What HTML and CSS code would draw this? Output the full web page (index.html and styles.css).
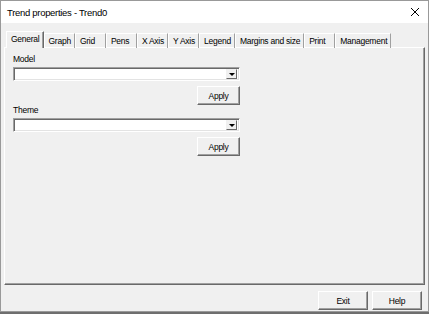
FILE: index.html
```html
<!DOCTYPE html>
<html>
<head>
	<meta charset="utf-8">
	<meta name="viewport" content="width=device-width, initial-scale=1">
	<title>Trend properties - Trend0</title>
	<link rel="stylesheet" href="styles.css">
</head>
<body>
<div class="window">
	<div class="titlebar">
		<span class="title">Trend properties - Trend0</span>
		<svg class="close" width="10" height="10" viewBox="0 0 10 10">
			<path d="M1 1 L9 9 M9 1 L1 9" stroke="#000" stroke-width="1" fill="none"/>
		</svg>
	</div>
	<div class="client">
		<div class="tabs">
			<div class="tab active">General</div>
			<div class="tab">Graph</div>
			<div class="tab">Grid</div>
			<div class="tab">Pens</div>
			<div class="tab">X Axis</div>
			<div class="tab">Y Axis</div>
			<div class="tab">Legend</div>
			<div class="tab">Margins and size</div>
			<div class="tab">Print</div>
			<div class="tab">Management</div>
		</div>
		<div class="panel">
			<div class="field">
				<div class="field-label">Model</div>
				<div class="combo"><span class="combo-arrow"></span></div>
				<div class="field-actions"><button type="button" class="btn btn-apply">Apply</button></div>
			</div>
			<div class="field">
				<div class="field-label">Theme</div>
				<div class="combo"><span class="combo-arrow"></span></div>
				<div class="field-actions"><button type="button" class="btn btn-apply">Apply</button></div>
			</div>
		</div>
	</div>
	<div class="footer">
		<button type="button" class="btn btn-footer">Exit</button>
		<button type="button" class="btn btn-footer">Help</button>
	</div>
</div>
</body>
</html>
```

FILE: styles.css
```css
body
{
	margin:0;
	background-color:#6e6e6e;
	font-family:"Liberation Sans", Arial, sans-serif;
	font-size:8.5px;
	letter-spacing:-0.25px;
	color:#000;
}
.window
{
	width:429px;
	height:312px;
	box-sizing:border-box;
	border:1px solid #999;
	background-color:#f0f0f0;
	display:flex;
	flex-direction:column;
}
.titlebar
{
	height:22px;
	flex:none;
	background-color:#fff;
	display:flex;
	align-items:center;
	justify-content:space-between;
	padding:0 8px 0 6px;
}
.title
{
	font-size:9.5px;
	letter-spacing:-0.3px;
}
.client
{
	flex:1;
	display:flex;
	flex-direction:column;
	padding:8px 3px 0 3px;
}
.tabs
{
	display:flex;
	align-items:flex-end;
	height:17px;
	padding-left:2px;
	margin-bottom:-1px;
	position:relative;
	z-index:1;
}
.tab
{
	height:14px;
	line-height:14px;
	min-width:22px;
	padding:0 3px 0 4px;
	border-top:1px solid #fff;
	border-left:1px solid #fff;
	border-right:1px solid #a0a0a0;
	white-space:nowrap;
}
.tab.active
{
	height:16px;
	line-height:15px;
	background-color:#f0f0f0;
	border-right-color:#696969;
	box-shadow:inset -1px 0 #a0a0a0;
}
.panel
{
	flex:1;
	border:1px solid;
	border-color:#fff #696969 #696969 #fff;
	box-shadow:inset -1px -1px #a0a0a0;
	padding:6px 0 0 8px;
}
.field
{
	width:227px;
}
.field-label
{
	height:11px;
	line-height:11px;
}
.combo
{
	height:14px;
	box-sizing:border-box;
	margin-top:2px;
	border:1px solid;
	border-color:#a0a0a0 #fff #fff #a0a0a0;
	box-shadow:inset 1px 1px #696969, inset -1px -1px #e3e3e3;
	background-color:#fff;
	display:flex;
	justify-content:flex-end;
	padding:1px 2px;
}
.combo-arrow
{
	width:11px;
	box-sizing:border-box;
	border:1px solid;
	border-color:#f0f0f0 #696969 #696969 #f0f0f0;
	background-color:#f0f0f0;
	display:flex;
	align-items:center;
	justify-content:center;
}
.combo-arrow::after
{
	content:"";
	border-left:3px solid transparent;
	border-right:3px solid transparent;
	border-top:3px solid #000;
	margin-top:1px;
}
.field-actions
{
	display:flex;
	justify-content:flex-end;
	margin-top:5px;
}
.btn
{
	box-sizing:border-box;
	height:19px;
	padding:0;
	border:1px solid;
	border-color:#fff #696969 #696969 #fff;
	box-shadow:inset -1px -1px #a0a0a0;
	background-color:#f0f0f0;
	font-family:inherit;
	font-size:8.5px;
	letter-spacing:-0.25px;
	color:#000;
}
.btn-apply
{
	width:43px;
}
.footer
{
	flex:none;
	display:flex;
	justify-content:flex-end;
	gap:4px;
	padding:6px 6px 1px 0;
}
.btn-footer
{
	width:50px;
}
```
